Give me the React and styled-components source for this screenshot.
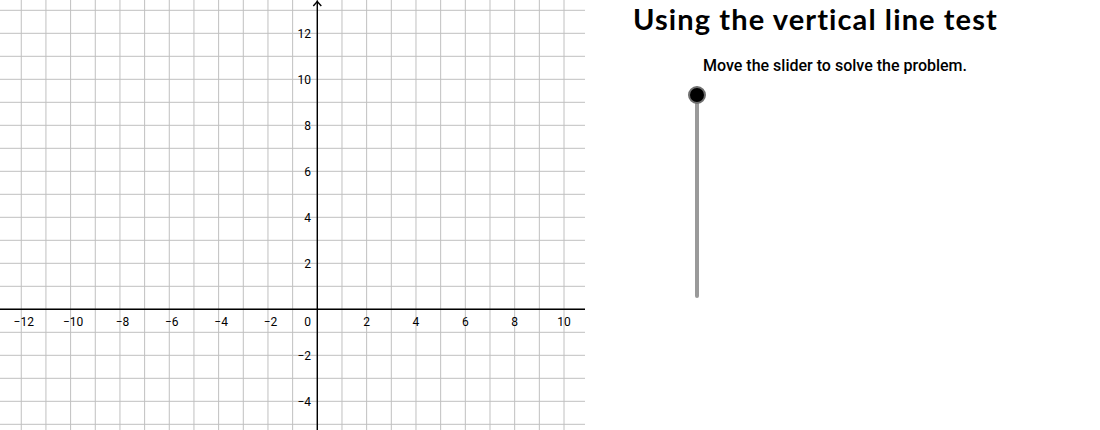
import React from "react";
import styled, { createGlobalStyle } from "styled-components";

const GlobalStyle = createGlobalStyle`
  html, body {
    margin: 0;
    padding: 0;
    background: #ffffff;
  }
  body {
    font-family: "Roboto", "Liberation Sans", sans-serif;
  }
`;

const ORIGIN_X = 317.3;
const ORIGIN_Y = 309.3;
const UNIT_X = 24.67;
const UNIT_Y = 23;
const WIDTH = 585;
const HEIGHT = 430;

const px = (v) => ORIGIN_X + v * UNIT_X;
const py = (v) => ORIGIN_Y - v * UNIT_Y;
const label = (n) => (n < 0 ? "\u2212" + Math.abs(n) : String(n));

function Graph() {
  const cols = [];
  for (let i = -12; i <= 10; i++) cols.push(i);
  const rows = [];
  for (let j = -5; j <= 13; j++) rows.push(j);
  const xLabels = [-12, -10, -8, -6, -4, -2, 2, 4, 6, 8, 10];
  const yLabels = [12, 10, 8, 6, 4, 2, -2, -4];

  return (
    <svg width={WIDTH} height={HEIGHT} viewBox={`0 0 ${WIDTH} ${HEIGHT}`}>
      <g stroke="#c0c0c0" strokeWidth="1">
        {cols.map((i) => (
          <line key={"c" + i} x1={px(i)} x2={px(i)} y1={0} y2={HEIGHT} />
        ))}
        {rows.map((j) => (
          <line key={"r" + j} x1={0} x2={WIDTH} y1={py(j)} y2={py(j)} />
        ))}
      </g>
      <g stroke="#000" strokeWidth="1.4" fill="none">
        <line x1={0} x2={WIDTH} y1={ORIGIN_Y} y2={ORIGIN_Y} />
        <line x1={ORIGIN_X} x2={ORIGIN_X} y1={0.5} y2={HEIGHT} />
        <polyline
          points={`${ORIGIN_X - 4},${6} ${ORIGIN_X},${1.5} ${ORIGIN_X + 4},${6}`}
        />
      </g>
      <g fontFamily="Roboto, 'Liberation Sans', sans-serif" fontSize="12" fill="#000">
        {xLabels.map((n) => (
          <text
            key={"x" + n}
            x={px(n) + (n < 0 ? 2.5 : 0)}
            y={ORIGIN_Y + 16.4}
            textAnchor="middle"
          >
            {label(n)}
          </text>
        ))}
        <text x={311} y={ORIGIN_Y + 16.4} textAnchor="end">
          0
        </text>
        {yLabels.map((n) => (
          <text key={"y" + n} x={311} y={py(n) + 4.6} textAnchor="end">
            {label(n)}
          </text>
        ))}
      </g>
    </svg>
  );
}

function VerticalSlider() {
  return (
    <SliderWrap>
      <Track />
      <Knob />
    </SliderWrap>
  );
}

export default function App() {
  return (
    <>
      <GlobalStyle />
      <Page>
        <GraphPanel>
          <Graph />
        </GraphPanel>
        <Side>
          <Title>Using the vertical line test</Title>
          <Instructions>Move the slider to solve the problem.</Instructions>
          <VerticalSlider />
        </Side>
      </Page>
    </>
  );
}

const Page = styled.div`
  display: flex;
  width: 1100px;
  height: 430px;
  overflow: hidden;
`;

const GraphPanel = styled.div`
  width: 585px;
  height: 430px;
  flex-shrink: 0;
  overflow: hidden;
  svg {
    display: block;
  }
`;

const Side = styled.div`
  display: flex;
  flex-direction: column;
  padding-left: 48px;
  padding-top: 2px;
`;

const Title = styled.h1`
  margin: 0;
  font-family: "Lato", "DejaVu Sans", sans-serif;
  font-weight: 700;
  font-size: 29px;
  letter-spacing: 1.1px;
  line-height: 34px;
  color: #000;
  white-space: nowrap;
`;

const Instructions = styled.p`
  margin: 20px 0 0 70px;
  font-family: "Roboto", "Liberation Sans", sans-serif;
  font-weight: 500;
  font-size: 16px;
  line-height: 20px;
  color: #000;
  white-space: nowrap;
`;

const SliderWrap = styled.div`
  position: relative;
  margin: 10px 0 0 55px;
  width: 18px;
  height: 214px;
`;

const Track = styled.div`
  position: absolute;
  left: 7px;
  top: 9px;
  width: 4px;
  height: 203px;
  border-radius: 2px;
  background: #9a9a9a;
`;

const Knob = styled.div`
  position: absolute;
  left: 0;
  top: 0;
  width: 14px;
  height: 14px;
  border-radius: 50%;
  background: #000;
  border: 2px solid #6f6f6f;
`;
